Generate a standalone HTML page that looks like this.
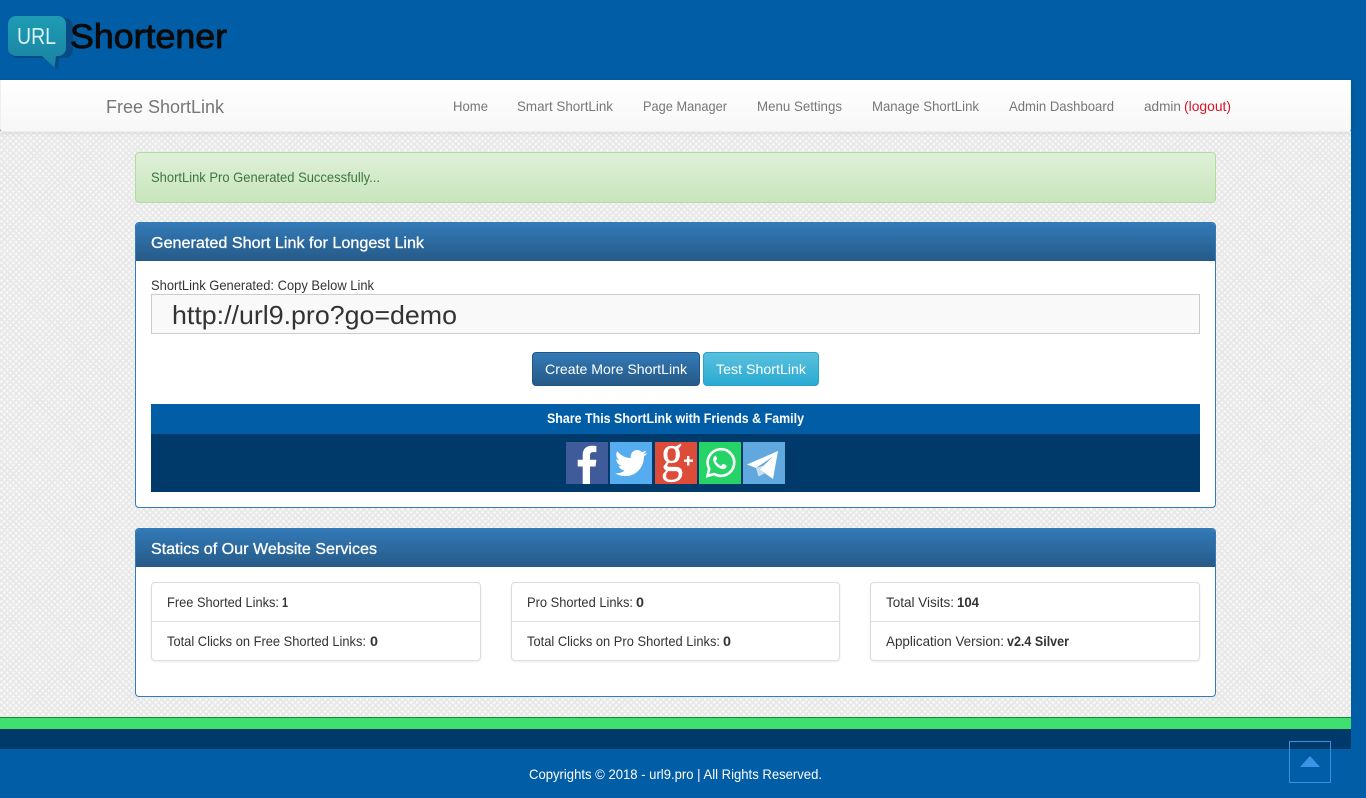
<!DOCTYPE html>
<html lang="en"><head><meta charset="utf-8"><title>Free ShortLink</title>
<style>
html,body{margin:0;padding:0;background:#005da6;width:1366px;height:798px;overflow:hidden;font-family:"Liberation Sans",sans-serif}
.a{position:absolute;box-sizing:border-box}
#bg{left:0;top:131px;width:1351px;height:586px;background-color:#f6f6f6;background-image:repeating-linear-gradient(45deg,#e7e7e7 0 1.5px,transparent 1.5px 4.2px),repeating-linear-gradient(-45deg,#e7e7e7 0 1.5px,transparent 1.5px 4.2px)}
#nav{left:0;top:80px;width:1351px;height:52px;background:linear-gradient(#fff,#f7f7f7);border:1px solid #eee;border-top:0;border-radius:0 0 3px 3px;box-shadow:0 1px 4px rgba(0,0,0,.1)}
#alert{left:135px;top:152px;width:1081px;height:51px;border:1px solid #b2dba1;border-radius:4px;background:linear-gradient(#dff0d8,#c8e5bc)}
.panel{left:135px;width:1081px;background:#fff;border:1px solid #337ab7;border-radius:4px;overflow:hidden}
.ph{height:38px;background:linear-gradient(#337ab7,#265a88)}
#inp{left:151px;top:294px;width:1049px;height:40px;background:#f9f9f9;border:1px solid #ccc}
.btn{top:352px;height:34px;border-radius:4px}
.list{top:582px;height:79px;background:#fff;border:1px solid #ddd;border-radius:4px;box-shadow:0 1px 2px rgba(0,0,0,.08)}
.list i{display:block;position:absolute;left:0;right:0;top:38px;height:1px;background:#ddd}
.tile{top:442px;width:42px;height:42px;overflow:hidden}
svg{display:block}
#t{left:0;top:0}
text{font-family:"Liberation Sans",sans-serif}
</style></head><body>
<div class="a" id="bg"></div>
<div class="a" id="nav"></div>
<div class="a" id="alert"></div>
<div class="a panel" style="top:222px;height:286px"><div class="ph"></div></div>
<div class="a panel" style="top:528px;height:169px"><div class="ph"></div></div>
<div class="a" id="inp"></div>
<div class="a btn" style="left:532px;width:168px;background:linear-gradient(#337ab7,#265a88);border:1px solid #245580"></div>
<div class="a btn" style="left:703px;width:116px;background:linear-gradient(#5bc0de,#2aabd2);border:1px solid #28a4c9"></div>
<div class="a" style="left:151px;top:404px;width:1049px;height:30px;background:#005da6"></div>
<div class="a" style="left:151px;top:434px;width:1049px;height:58px;background:#003a6b"></div>
<div class="a list" style="left:151px;width:330px"><i></i></div>
<div class="a list" style="left:511px;width:329px"><i></i></div>
<div class="a list" style="left:870px;width:330px"><i></i></div>

<div class="a tile" style="left:566px;background:#3f5b99"><svg width="42" height="42" viewBox="0 0 42 42"><path fill="#fff" d="M24 42V24.500h5.500l.9-6.800H24v-4.300c0-2 .6-3.300 3.400-3.300h3V4c-.6-.1-2.300-.3-4.800-.3-5.300 0-8.900 3.200-8.900 9.100v4.900h-5v6.800h5V42z"/></svg></div>
<div class="a tile" style="left:610px;background:#55acee"><svg width="42" height="42" viewBox="0 0 42 42"><g transform="translate(5 5) scale(1.34)"><path fill="#fff" d="M23.950 4.570a10 10 0 0 1-2.820.77 4.960 4.960 0 0 0 2.160-2.720 9.900 9.900 0 0 1-3.120 1.190 4.920 4.920 0 0 0-8.380 4.480C7.690 8.090 4.070 6.130 1.640 3.160a4.820 4.820 0 0 0-.67 2.480 4.910 4.910 0 0 0 2.190 4.100 4.900 4.900 0 0 1-2.230-.62v.06a4.920 4.920 0 0 0 3.950 4.830 4.900 4.900 0 0 1-2.210.08 4.930 4.930 0 0 0 4.600 3.420A9.870 9.870 0 0 1 0 19.540a13.940 13.940 0 0 0 7.550 2.210c9.050 0 14-7.500 14-13.980 0-.21 0-.42-.02-.63a9.940 9.940 0 0 0 2.460-2.550z"/></g></svg></div>
<div class="a tile" style="left:655px;background:#dd4b39"><svg width="42" height="42" viewBox="0 0 42 42"><text x="6" y="29" font-size="52" fill="#fff" stroke="#fff" stroke-width=".3" textLength="22" lengthAdjust="spacingAndGlyphs" style="font-family:'Liberation Serif',serif">g</text><path fill="#fff" d="M29 17.500h3v-3.500h2.400v3.500H38v2.400h-3.600v3.600H32v-3.600h-3z"/></svg></div>
<div class="a tile" style="left:699px;background:#25d366"><svg width="42" height="42" viewBox="0 0 42 42"><path fill="none" stroke="#fff" stroke-width="2.600" d="M8.500 34l1.700-7.200A13.300 13.300 0 1 1 15.200 32z"/><path fill="#fff" d="M16.800 14c-.5-.1-1 0-1.400.5-.9.900-1.400 2.200-1.200 3.600.5 2.500 2 4.700 3.900 6.400 1.700 1.500 3.800 2.400 5.900 2.700 1.400.1 2.700-.7 3.300-1.900.3-.6.4-1.100.3-1.700-.7-.5-2.200-1.200-3.100-1.700-.4-.2-.8 0-1 .4l-1 1.200c-.3.300-.5.400-.8.200-2.200-.9-3.800-2.400-4.800-4.400-.2-.4-.1-.6.200-.9l.8-1c.3-.3.300-.6.100-1l-1.200-2.800c-.2-.4-.4-.5-.8-.5z"/></svg></div>
<div class="a tile" style="left:743px;background:#61a8de"><svg width="42" height="42" viewBox="0 0 42 42"><path fill="#fff" d="M35 9L4 22.500l9 3.500L30 14.500 16.500 27.500 30 37z"/><path fill="#c7dff2" d="M13 26l2.500 8.500 6-3L16.500 27.500l4-4z"/></svg></div>

<div class="a" style="left:0;top:717px;width:1351px;height:2px;background:#0f8a3a"></div>
<div class="a" style="left:0;top:718px;width:1351px;height:11px;background:#3fe070"></div>
<div class="a" style="left:0;top:729px;width:1351px;height:20px;background:#003a6b"></div>
<div class="a" style="left:1289px;top:741px;width:42px;height:42px;border:1px solid #3b8fdd"></div>
<svg class="a" style="left:1300px;top:756px" width="20" height="11"><path fill="#3d94e6" d="M10 0L20 11H0z"/></svg>

<svg class="a" style="left:7px;top:15px" width="68" height="56" viewBox="0 0 68 56"><defs><linearGradient id="lg" x1="0" y1="0" x2="0" y2="1"><stop offset="0" stop-color="#1e9cb3"/><stop offset="1" stop-color="#1a82a3"/></linearGradient></defs><path fill="#0a3f6c" d="M11 3h47a8 8 0 0 1 8 8v24a8 8 0 0 1-8 8h-6l-1 11.500L38 43H11a8 8 0 0 1-8-8V11a8 8 0 0 1 8-8z" opacity=".6"/><path fill="url(#lg)" d="M9 1h42a8 8 0 0 1 8 8v24a8 8 0 0 1-8 8h-2l-1.500 11.500L35 41H9a8 8 0 0 1-8-8V9a8 8 0 0 1 8-8z"/></svg>

<svg class="a" id="t" width="1366" height="798" viewBox="0 0 1366 798">
<text x="17" y="44" font-size="23" fill="#d8f2f5" textLength="39" lengthAdjust="spacingAndGlyphs">URL</text>
<text x="70" y="48" font-size="34" fill="#0a0a0a" stroke="#0a0a0a" stroke-width=".9" textLength="157" lengthAdjust="spacingAndGlyphs">Shortener</text>

<text x="106" y="113" font-size="18" fill="#777" textLength="118" lengthAdjust="spacingAndGlyphs">Free ShortLink</text>
<g font-size="14" fill="#777">
<text x="453" y="111" textLength="35" lengthAdjust="spacingAndGlyphs">Home</text>
<text x="517" y="111" textLength="96" lengthAdjust="spacingAndGlyphs">Smart ShortLink</text>
<text x="643" y="111" textLength="84" lengthAdjust="spacingAndGlyphs">Page Manager</text>
<text x="757" y="111" textLength="85" lengthAdjust="spacingAndGlyphs">Menu Settings</text>
<text x="872" y="111" textLength="107" lengthAdjust="spacingAndGlyphs">Manage ShortLink</text>
<text x="1009" y="111" textLength="105" lengthAdjust="spacingAndGlyphs">Admin Dashboard</text>
<text x="1144" y="111" textLength="37" lengthAdjust="spacingAndGlyphs">admin</text>
<text x="1184" y="111" fill="#d9142b" textLength="47" lengthAdjust="spacingAndGlyphs">(logout)</text>
</g>

<text x="151" y="182" font-size="14" fill="#3c763d" textLength="229" lengthAdjust="spacingAndGlyphs">ShortLink Pro Generated Successfully...</text>
<text x="151" y="248" font-size="16" fill="#fff" stroke="#fff" stroke-width=".3" textLength="273" lengthAdjust="spacingAndGlyphs">Generated Short Link for Longest Link</text>
<text x="151" y="290" font-size="14" fill="#333" textLength="223" lengthAdjust="spacingAndGlyphs">ShortLink Generated: Copy Below Link</text>
<text x="172" y="324" font-size="26" fill="#333" textLength="285" lengthAdjust="spacingAndGlyphs">http://url9.pro?go=demo</text>
<text x="545" y="374" font-size="14" fill="#fff" textLength="142" lengthAdjust="spacingAndGlyphs">Create More ShortLink</text>
<text x="716" y="374" font-size="14" fill="#fff" textLength="90" lengthAdjust="spacingAndGlyphs">Test ShortLink</text>
<text x="547" y="423" font-size="14" font-weight="700" fill="#fff" textLength="257" lengthAdjust="spacingAndGlyphs">Share This ShortLink with Friends &amp; Family</text>
<text x="151" y="554" font-size="16" fill="#fff" stroke="#fff" stroke-width=".3" textLength="226" lengthAdjust="spacingAndGlyphs">Statics of Our Website Services</text>

<g font-size="14" fill="#333">
<text x="167" y="607" textLength="112" lengthAdjust="spacingAndGlyphs">Free Shorted Links:</text>
<text x="282" y="607" font-weight="700" textLength="6" lengthAdjust="spacingAndGlyphs">1</text>
<text x="167" y="646" textLength="199" lengthAdjust="spacingAndGlyphs">Total Clicks on Free Shorted Links:</text>
<text x="370" y="646" font-weight="700" textLength="8" lengthAdjust="spacingAndGlyphs">0</text>
<text x="527" y="607" textLength="106" lengthAdjust="spacingAndGlyphs">Pro Shorted Links:</text>
<text x="636" y="607" font-weight="700" textLength="8" lengthAdjust="spacingAndGlyphs">0</text>
<text x="527" y="646" textLength="193" lengthAdjust="spacingAndGlyphs">Total Clicks on Pro Shorted Links:</text>
<text x="723" y="646" font-weight="700" textLength="8" lengthAdjust="spacingAndGlyphs">0</text>
<text x="886" y="607" textLength="68" lengthAdjust="spacingAndGlyphs">Total Visits:</text>
<text x="957" y="607" font-weight="700" textLength="22" lengthAdjust="spacingAndGlyphs">104</text>
<text x="886" y="646" textLength="118" lengthAdjust="spacingAndGlyphs">Application Version:</text>
<text x="1007" y="646" font-weight="700" textLength="62" lengthAdjust="spacingAndGlyphs">v2.4 Silver</text>
</g>
<text x="529" y="779" font-size="14" fill="#fff" textLength="293" lengthAdjust="spacingAndGlyphs">Copyrights © 2018 - url9.pro | All Rights Reserved.</text>
</svg>
</body></html>
